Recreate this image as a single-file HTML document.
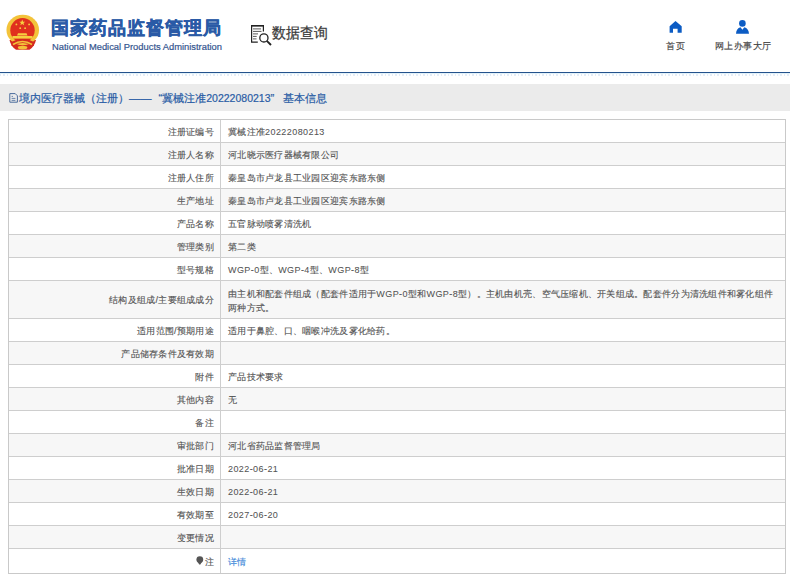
<!DOCTYPE html>
<html><head><meta charset="utf-8">
<style>
*{margin:0;padding:0;box-sizing:border-box}
html,body{width:790px;height:581px;overflow:hidden;background:#fff;font-family:"Liberation Sans",sans-serif;color:#333}
.abs{position:absolute}
#hdr{position:absolute;left:0;top:0;width:790px;height:72px;background:#fff}
#line{position:absolute;left:0;top:72px;width:790px;height:1px;background:#24528c}
#pat{position:absolute;left:0;top:73px;width:790px;height:1px;background:#e2f2fa}
#pat2{position:absolute;left:0;top:74px;width:790px;height:2px;background:repeating-linear-gradient(90deg,#e3ecf6 0,#e3ecf6 1.5px,#fff 1.5px,#fff 3.5px)}
#band{position:absolute;left:0;top:84px;width:790px;height:27px;background:#ebebeb}
#ttl{position:absolute;left:19px;top:90.8px;font-size:11.25px;line-height:14px;color:#295ca5;-webkit-text-stroke:0.2px #295ca5;white-space:nowrap}
#tbl{position:absolute;left:8px;top:119px;width:778px;border:1px solid #c9c9c9;border-collapse:collapse}
table{border-collapse:collapse;width:100%}
td{box-sizing:content-box;border-bottom:1px solid #cecece;height:20px;padding-top:2px;padding-bottom:0;font-size:9.3px;letter-spacing:0.27px;color:#535353;-webkit-text-stroke:0.12px #535353;vertical-align:middle}
td.l{width:205px;text-align:right;padding-right:6px;border-right:1px solid #cecece}
td.v{padding-left:7px}
tr:nth-child(even) td{background:#f7f7f7}
.n{font-size:9px;letter-spacing:0.42px;-webkit-text-stroke:0.05px #4d4d4d}
</style></head><body>
<div id="hdr">
  <svg class="abs" style="left:0px;top:0px" width="50" height="60" viewBox="0 0 50 60">
    <path d="M9.5 40 Q11 46.5 16 49.8 L29.5 49.8 Q34.5 46.5 36 40 Z" fill="#d52b1e"/>
    <ellipse cx="22.75" cy="30" rx="16.3" ry="15.2" fill="#f3c33a"/>
    <circle cx="22.5" cy="30.3" r="12.2" fill="#e0301e"/>
    <path d="M11.5 42 Q22.5 35 34 42 L34 46 Q22.5 40 11.5 46 Z" fill="#d52b1e"/>
    <path d="M22.2 19.6 L23.1 21.8 L25.3 21.8 L23.5 23.1 L24.2 25.2 L22.2 23.9 L20.3 25.2 L21 23.1 L19.2 21.8 L21.4 21.8 Z" fill="#f6d040"/>
    <circle cx="16.4" cy="24.4" r="0.9" fill="#f6d040"/>
    <circle cx="29.1" cy="24.4" r="0.9" fill="#f6d040"/>
    <circle cx="20.2" cy="28.2" r="0.9" fill="#f6d040"/>
    <circle cx="25.1" cy="28.2" r="0.9" fill="#f6d040"/>
    <path d="M17 35.5 L18 33.3 L26.5 33.3 L27.5 35.5 Z" fill="#f6d040"/>
    <rect x="12.5" y="36" width="20" height="2.6" fill="#f6d040"/>
    <path d="M13 44.5 Q22.5 38.5 32 44.5" fill="none" stroke="#f3c33a" stroke-width="1.5"/>
    <ellipse cx="22.6" cy="47.6" rx="4.8" ry="1.9" fill="#f3c33a"/>
  </svg>
  <div class="abs" style="left:51px;top:18px;font-size:17.5px;line-height:20px;font-weight:bold;letter-spacing:1px;color:#2a5aa6;-webkit-text-stroke:0.45px #2a5aa6;white-space:nowrap">国家药品监督管理局</div>
  <div class="abs" style="left:52px;top:40.7px;font-size:9.6px;line-height:11px;color:#34558f;-webkit-text-stroke:0.2px #34558f;transform:scaleX(0.975);transform-origin:0 0;white-space:nowrap">National Medical Products Administration</div>
  <svg class="abs" style="left:248px;top:22px" width="28" height="26" viewBox="0 0 28 26">
    <path d="M9.8 20.2 L3.6 20.2 L3.6 3.7 L15.4 3.7 L15.4 9.6" fill="none" stroke="#222" stroke-width="1.2"/>
    <rect x="3" y="3" width="13" height="1.5" fill="#222"/>
    <g stroke="#444" stroke-width="0.9"><line x1="5" y1="6.9" x2="13" y2="6.9"/><line x1="5" y1="9.4" x2="13.5" y2="9.4"/><line x1="5" y1="11.9" x2="10" y2="11.9"/><line x1="5" y1="14.4" x2="8.7" y2="14.4"/><line x1="5" y1="16.9" x2="8.5" y2="16.9"/></g>
    <circle cx="15.9" cy="15.9" r="4.1" fill="none" stroke="#222" stroke-width="1.3"/>
    <line x1="18.8" y1="18.8" x2="23" y2="23" stroke="#222" stroke-width="1.9"/>
  </svg>
  <div class="abs" style="left:272px;top:23.5px;font-size:15px;line-height:18px;color:#3a3a3a;-webkit-text-stroke:0.25px #3a3a3a;transform:scaleX(0.925);transform-origin:0 0;white-space:nowrap">数据查询</div>
  <svg class="abs" style="left:668px;top:20px" width="15" height="14" viewBox="0 0 15 14">
    <path d="M7.5 1 L13.7 6.2 L13.7 12.7 L9.6 12.7 L9.6 8.7 L5 8.7 L5 12.7 L1.6 12.7 L1.6 6.2 Z" fill="#0c5cc4"/>
  </svg>
  <div class="abs" style="left:666px;top:39.5px;font-size:9px;letter-spacing:0.6px;line-height:12px;color:#444;-webkit-text-stroke:0.15px #444;white-space:nowrap">首页</div>
  <svg class="abs" style="left:735px;top:19px" width="15" height="15" viewBox="0 0 15 15">
    <circle cx="7.4" cy="4.4" r="3.3" fill="#0c5cc4"/>
    <path d="M1 14.8 Q1.3 9.3 5.5 8.3 L7.4 10.8 L9.3 8.3 Q13.6 9.3 14 14.8 Z" fill="#0c5cc4"/>
  </svg>
  <div class="abs" style="left:714.5px;top:39.5px;font-size:9px;letter-spacing:0.55px;line-height:12px;color:#444;-webkit-text-stroke:0.15px #444;white-space:nowrap">网上办事大厅</div>
</div>
<div id="line"></div>
<div id="pat"></div><div id="pat2"></div>
<div id="band"></div>
<svg class="abs" style="left:8px;top:92px" width="11" height="12" viewBox="0 0 11 12">
  <path d="M1.8 1.6 L7.2 1.6 L9.4 3.8 L9.4 10.2 L1.8 10.2 Z" fill="none" stroke="#4a6c9c" stroke-width="1"/>
  <g stroke="#4a6c9c" stroke-width="0.8"><line x1="3.6" y1="4.4" x2="5" y2="4.4"/><line x1="3.6" y1="6.4" x2="7.4" y2="6.4"/><line x1="3.6" y1="8.4" x2="7.4" y2="8.4"/></g>
</svg>
<div id="ttl">境内医疗器械（注册）——<span style="margin-left:7px">“</span>冀械注准<span style="font-size:10.5px">20222080213</span>”<span style="margin-left:9px">基本信息</span></div>
<div id="tbl"><table>
<tr><td class="l" style="height:19px">注册证编号</td><td class="v">冀械注准<span class="n">20222080213</span></td></tr>
<tr><td class="l">注册人名称</td><td class="v">河北晓示医疗器械有限公司</td></tr>
<tr><td class="l">注册人住所</td><td class="v">秦皇岛市卢龙县工业园区迎宾东路东侧</td></tr>
<tr><td class="l">生产地址</td><td class="v">秦皇岛市卢龙县工业园区迎宾东路东侧</td></tr>
<tr><td class="l">产品名称</td><td class="v">五官脉动喷雾清洗机</td></tr>
<tr><td class="l">管理类别</td><td class="v">第二类</td></tr>
<tr><td class="l">型号规格</td><td class="v"><span class="n">WGP-0</span>型、<span class="n">WGP-4</span>型、<span class="n">WGP-8</span>型</td></tr>
<tr><td class="l" style="height:35px">结构及组成/主要组成成分</td><td class="v" style="line-height:14.5px;padding-top:3px;height:34px">由主机和配套件组成（配套件适用于<span class="n">WGP-0</span>型和<span class="n">WGP-8</span>型）。主机由机壳、空气压缩机、开关组成。配套件分为清洗组件和雾化组件<br>两种方式。</td></tr>
<tr><td class="l">适用范围/预期用途</td><td class="v">适用于鼻腔、口、咽喉冲洗及雾化给药。</td></tr>
<tr><td class="l">产品储存条件及有效期</td><td class="v"></td></tr>
<tr><td class="l">附件</td><td class="v">产品技术要求</td></tr>
<tr><td class="l">其他内容</td><td class="v">无</td></tr>
<tr><td class="l">备注</td><td class="v"></td></tr>
<tr><td class="l">审批部门</td><td class="v">河北省药品监督管理局</td></tr>
<tr><td class="l">批准日期</td><td class="v"><span class="n">2022-06-21</span></td></tr>
<tr><td class="l">生效日期</td><td class="v"><span class="n">2022-06-21</span></td></tr>
<tr><td class="l">有效期至</td><td class="v"><span class="n">2027-06-20</span></td></tr>
<tr><td class="l">变更情况</td><td class="v"></td></tr>
<tr><td class="l" style="height:22px;border-bottom:0"><svg width="8" height="10" viewBox="0 0 8 10" style="vertical-align:-1px;margin-right:1px"><circle cx="3.8" cy="3.6" r="3.4" fill="#555"/><path d="M1.6 5.8 L6 5.8 L4.4 8.6 L3.2 8.6 Z" fill="#555"/></svg>注</td><td class="v" style="color:#3a86d8;-webkit-text-stroke:0.12px #3a86d8;border-bottom:0">详情</td></tr>
</table></div>
</body></html>
